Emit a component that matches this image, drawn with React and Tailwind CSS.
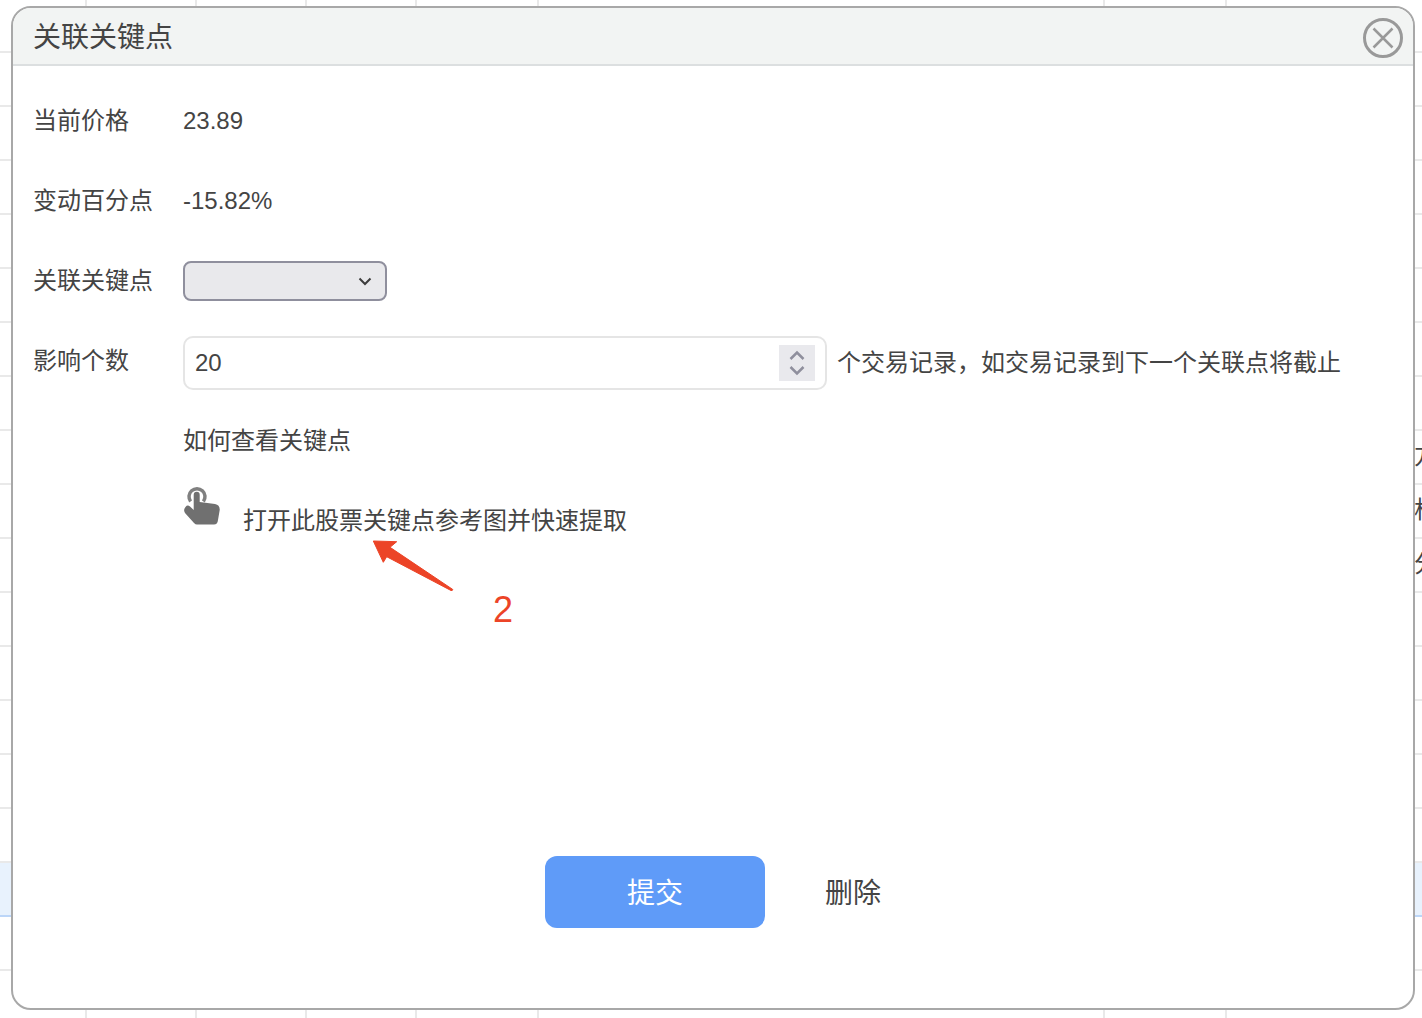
const font = { fontFamily: '"Liberation Sans", "Noto Sans CJK SC", sans-serif' };

const columns = [87, 110, 110, 110, 122, 566, 122, 187];
const rows = Array.from({ length: 19 }, (_, i) => i);
const sideText = { 8: "方", 9: "析", 10: "分" };

// Spreadsheet table that sits behind the dialog
const BackgroundTable = () => (
  <div className="flex flex-col">
    {rows.map((row) => (
      <div
        key={row}
        className={`flex shrink-0 border-b-2 ${
          row === 16 ? "bg-[#e8f2fd] border-[#bcd6f8]" : "border-[#e9e9e9]"
        } ${row === 0 ? "h-[53px]" : "h-[54px]"}`}
      >
        {columns.map((width, i) => (
          <div
            key={i}
            style={{ width }}
            className={`shrink-0 ${i < 7 ? "border-r-2" : ""} ${
              row === 16 ? "border-transparent" : "border-[#e9e9e9]"
            }`}
          />
        ))}
        {sideText[row] && (
          <span className="text-[24px] leading-[50px] text-[#444] whitespace-nowrap">
            {sideText[row]}
          </span>
        )}
      </div>
    ))}
  </div>
);

const CloseIcon = () => (
  <svg width="42" height="42" viewBox="0 0 42 42" fill="none" stroke="#999" strokeWidth="3">
    <circle cx="21" cy="21" r="18.5" />
    <path d="M11.5 11.5 30.5 30.5M30.5 11.5 11.5 30.5" strokeWidth="2.5" />
  </svg>
);

const HandIcon = () => (
  <svg width="40" height="44" viewBox="0 0 40 44" className="shrink-0">
    <path d="M7.6 17.5a8 8 0 1 1 12.8 0" fill="none" stroke="#808080" strokeWidth="3.5" />
    <path
      d="M10.7 10.7a3 3 0 0 1 6 0V18L32 20Q37 21 36.7 26L35 36Q34.5 40.5 31 40.5H14Q12.5 40.5 11 39L2 29Q0 26 2.5 23Q4.5 20.5 7 22.5L10.7 26Z"
      fill="#707070"
    />
  </svg>
);

const Row = ({ label, children }) => (
  <div className="flex items-center h-20">
    <div className="w-[150px] shrink-0">{label}</div>
    {children}
  </div>
);

const App = () => {
  return (
    <div style={font} className="relative w-[1422px] h-[1018px] overflow-hidden bg-white text-[#444]">
      <BackgroundTable />

      <div className="absolute left-[11px] top-[6px] w-[1404px] h-[1004px] flex flex-col rounded-[20px] border-2 border-[#a8a8a8] bg-white overflow-hidden">
        <div className="flex items-center justify-between h-[58px] shrink-0 pl-5 pr-[9px] pt-1 bg-[#f2f4f3] border-b-2 border-[#dcdfe0]">
          <span className="text-[28px]">关联关键点</span>
          <CloseIcon />
        </div>

        <div className="flex flex-col pl-5 pt-[15px] text-[24px]">
          <Row label="当前价格">
            <span>23.89</span>
          </Row>
          <Row label="变动百分点">
            <span>-15.82%</span>
          </Row>
          <Row label="关联关键点">
            <div className="relative">
              <select className="block w-[204px] h-10 appearance-none rounded-lg border-2 border-[#8f8f9d] bg-[#e9e9ec]" />
              <svg
                width="14"
                height="10"
                viewBox="0 0 14 10"
                fill="none"
                stroke="#3d3d3d"
                strokeWidth="2"
                className="absolute right-[15px] top-[16px]"
              >
                <path d="M1.5 1.5 7 7l5.5-5.5" />
              </svg>
            </div>
          </Row>
          <Row label="影响个数">
            <div className="relative mt-1">
              <input
                readOnly
                value="20"
                className="block w-[644px] h-[54px] pl-[10px] rounded-[10px] border-2 border-[#e5e5e5] bg-white outline-none"
              />
              <div className="absolute right-[12px] top-[9px] w-9 h-9 flex items-center justify-center bg-[#e9e9ed]">
                <svg width="18" height="28" viewBox="0 0 18 28" fill="none" stroke="#8f8f9d" strokeWidth="2.5">
                  <path d="M2.5 10 9 3.5 15.5 10M2.5 18 9 24.5 15.5 18" />
                </svg>
              </div>
            </div>
            <span className="ml-[10px] mt-1 whitespace-nowrap">个交易记录，如交易记录到下一个关联点将截止</span>
          </Row>
          <Row label="">
            <span>如何查看关键点</span>
          </Row>
          <div className="flex items-start h-20 pl-[150px]">
            <div className="w-[60px] pt-[3px]">
              <HandIcon />
            </div>
            <span className="mt-[22px]">打开此股票关键点参考图并快速提取</span>
          </div>
        </div>

        <div className="mt-auto mb-20 flex items-center justify-center gap-[60px] text-[28px]">
          <button className="w-[220px] h-[72px] pt-1 rounded-xl bg-[#5f9bf8] text-white">提交</button>
          <button className="pt-1">删除</button>
        </div>
      </div>

      {/* annotation drawn over the screenshot */}
      <svg width="90" height="60" viewBox="0 0 90 60" className="absolute left-[368px] top-[536px]">
        <path
          d="M5.3 5 28.7 5.7 22 11.3 84.8 53.5Q84.5 55 83 54.5L18.7 20.7 15.3 26.3Z"
          fill="#ec4427"
          stroke="#ec4427"
          strokeWidth="1"
          strokeLinejoin="round"
        />
      </svg>
      <span className="absolute left-[493px] top-[589px] text-[36px] leading-[41px] text-[#ec4427]">2</span>
    </div>
  );
};

export default App;
